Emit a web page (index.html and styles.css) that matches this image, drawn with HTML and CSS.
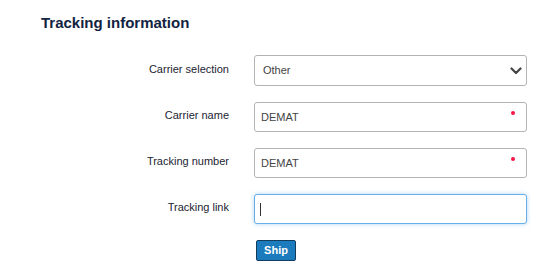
FILE: index.html
```html
<!DOCTYPE html>
<html>
<head>
<meta charset="utf-8">
<link rel="stylesheet" href="styles.css">
</head>
<body>
<div class="page">
  <h2 class="title">Tracking information</h2>
  <form class="form">
    <label class="label">Carrier selection</label>
    <div class="field select">
      <span class="value">Other</span>
      <svg class="chev" width="12" height="8" viewBox="0 0 12 8"><path d="M1.5 1.5 L6 6 L10.5 1.5" fill="none" stroke="#444" stroke-width="2.2" stroke-linecap="round" stroke-linejoin="round"/></svg>
    </div>

    <label class="label">Carrier name</label>
    <div class="field input">
      <span class="value">DEMAT</span>
      <span class="req"></span>
    </div>

    <label class="label">Tracking number</label>
    <div class="field input">
      <span class="value">DEMAT</span>
      <span class="req"></span>
    </div>

    <label class="label">Tracking link</label>
    <div class="field input focus">
      <span class="caret"></span>
    </div>

    <span></span>
    <div class="actions">
      <button type="button" class="btn">Ship</button>
    </div>
  </form>
</div>
</body>
</html>
```

FILE: styles.css
```css
html, body {
  margin: 0;
  padding: 0;
  background: #fff;
}
body {
  font-family: "Liberation Sans", Arial, sans-serif;
}
.page {
  padding: 14px 0 0 41px;
}
.title {
  margin: 0;
  font-size: 15px;
  line-height: 18px;
  font-weight: bold;
  color: #12233f;
}
.form {
  margin-top: 23px;
  display: grid;
  grid-template-columns: 188px 273px;
  column-gap: 25px;
  row-gap: 16px;
  align-items: center;
}
.label {
  text-align: right;
  font-size: 11px;
  line-height: 13px;
  color: #1c2433;
  margin-top: -3px;
}
.field {
  position: relative;
  box-sizing: border-box;
  height: 30px;
  border: 1px solid #b3b3b3;
  border-radius: 3px;
  background: #fff;
  display: flex;
  align-items: center;
  font-size: 11px;
  color: #444;
}
.select {
  height: 31px;
  padding-left: 8px;
  justify-content: space-between;
  padding-right: 4px;
}
.input {
  padding-left: 6px;
}
.value {
  line-height: 13px;
}
.chev {
  display: block;
}
.req {
  position: absolute;
  right: 11px;
  top: 8px;
  width: 4px;
  height: 4px;
  border-radius: 50%;
  background: #f0174a;
}
.focus {
  border-color: #69aee6;
  box-shadow: 0 0 4px rgba(102, 175, 233, 0.55);
}
.caret {
  display: block;
  width: 1px;
  height: 13px;
  background: #333;
  margin-left: -1px;
}
.actions {
  padding-left: 2px;
}
.btn {
  box-sizing: border-box;
  height: 21px;
  width: 40px;
  padding: 0;
  border: 1px solid #133b5c;
  border-radius: 2px;
  background: #1b7bbd;
  color: #fff;
  font-family: "Liberation Sans", Arial, sans-serif;
  font-weight: bold;
  font-size: 11px;
  line-height: 19px;
  display: block;
}
```
